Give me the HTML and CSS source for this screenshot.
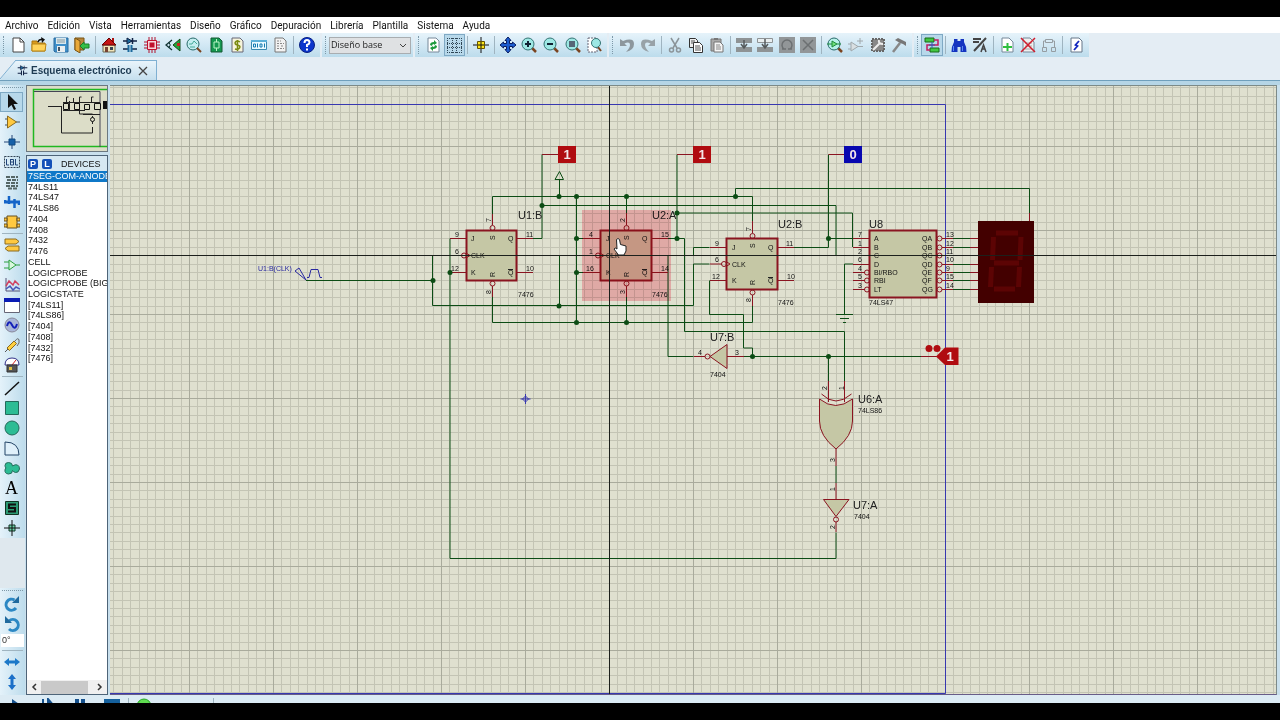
FILE: index.html
```html
<!DOCTYPE html>
<html lang="es">
<head>
<meta charset="utf-8">
<title>Esquema electrónico</title>
<link rel="stylesheet" href="styles.css">
</head>
<body>
<div class="letterbox"></div>
<nav class="menu" aria-label="Menú principal">
<button>Archivo</button><button>Edición</button><button>Vista</button><button>Herramientas</button><button>Diseño</button><button>Gráfico</button><button>Depuración</button><button>Librería</button><button>Plantilla</button><button>Sistema</button><button>Ayuda</button>
</nav>

<header class="bars">
<div class="bar" role="toolbar" aria-label="Proyecto">
<div class="group n4">
<button aria-label="Nuevo"><svg class="ic" viewBox="0 0 16 16"><path d="M3 1h7l4 4v10H3z" fill="#fff" stroke="#444"/><path d="M10 1v4h4" fill="none" stroke="#444"/></svg></button>
<button aria-label="Abrir"><svg class="ic" viewBox="0 0 16 16"><path d="M1 4h5l1 2h7v8H1z" fill="#d99a1c" stroke="#a87410"/><path d="M1 14V7h14l-1 7z" fill="#ffd35a" stroke="#b88618"/><path d="M7 5q1-3 4-2.500" fill="none" stroke="#111" stroke-width="1.500"/><path d="M10 0l4 2.500L11 6z" fill="#111"/></svg></button>
<button aria-label="Guardar"><svg class="ic" viewBox="0 0 16 16"><path d="M1 1h14v14H2l-1-1z" fill="#3f8fc9" stroke="#2a6a9e"/><path d="M3 1h10v6H3z" fill="#d8e8ee"/><path d="M4 3h8M4 5h8" stroke="#8a9aa0"/><path d="M4 9h8v6H4z" fill="#e9eef0"/><path d="M5 10h2v4H5z" fill="#456"/></svg></button>
<button aria-label="Cerrar proyecto"><svg class="ic" viewBox="0 0 16 16"><path d="M1 1h9v12H1z" fill="#b8863a" stroke="#7a5414"/><path d="M1 1l5 3v12l-5-3z" fill="#e8a93a" stroke="#7a5414"/><path d="M6 9l4-4v2h5v4h-5v2z" fill="#34c048" stroke="#18802a"/></svg></button>
</div><i class="sep"></i>
<div class="group n9">
<button aria-label="Inicio"><svg class="ic" viewBox="0 0 16 16"><path d="M11 1h2v4h-2z" fill="#a11"/><path d="M2 8h12v7H2z" fill="#f1e4b8" stroke="#665"/><path d="M1 8l7-7 7 7z" fill="#c61414" stroke="#600"/><path d="M4 10h3v5H4z" fill="#743"/><path d="M9 10h3v3H9z" fill="#345"/></svg></button>
<button aria-label="Esquema"><svg class="ic" viewBox="0 0 16 16"><path d="M1 4h14M1 12h5M9 12h6" stroke="#124" stroke-width="1.500"/><path d="M5 1v6l5-3z" fill="#1c6a9e" stroke="#124"/><path d="M10.500 1v6" stroke="#124" stroke-width="1.500"/><path d="M6.500 8v7M9.500 8v7" stroke="#1c6a9e" stroke-width="2"/></svg></button>
<button aria-label="PCB"><svg class="ic" viewBox="0 0 16 16"><path d="M5 0v16M8 0v16M11 0v16M0 5h16M0 8h16M0 11h16" stroke="#b0102c"/><path d="M3.500 3.500h9v9h-9z" fill="#f6d5da" stroke="#c0102c"/><path d="M5.500 5.500h5v5h-5z" fill="#c0102c"/></svg></button>
<button aria-label="Visor 3D"><svg class="ic" viewBox="0 0 16 16"><path d="M7 3L1 8l6 5" fill="none" stroke="#133" stroke-width="1.300"/><path d="M4 5.500q2.500 2.500 0 5" fill="none" stroke="#133"/><path d="M15 2v12L8 8z" fill="#24a43a" stroke="#154a1c"/><path d="M12 6h3v3h-3z" fill="#c22"/></svg></button>
<button aria-label="Visor Gerber"><svg class="ic" viewBox="0 0 16 16"><circle cx="7" cy="7" r="6" fill="#c4eef0" stroke="#286a6a"/><path d="M3 7h3l2-3 3 3M4 10h5" fill="none" stroke="#4a9"/><path d="M11 11l4 4" stroke="#7a4420" stroke-width="2"/></svg></button>
<button aria-label="Explorador"><svg class="ic" viewBox="0 0 16 16"><path d="M3 1h8l3 3v11H3z" fill="#149850" stroke="#145a34"/><path d="M6 5h5v6H6zM8.500 2v3M8.500 11v3" fill="none" stroke="#b9f4c5"/></svg></button>
<button aria-label="Materiales"><svg class="ic" viewBox="0 0 16 16"><path d="M3 1h8l3 3v11H3z" fill="#f6f4dc" stroke="#667"/><path d="M11 5Q8 3 6.500 5t2 3 2 3-4.500 1M8.500 3v11" fill="none" stroke="#7a8a10" stroke-width="1.500"/></svg></button>
<button aria-label="Código"><svg class="ic" viewBox="0 0 16 16"><path d="M.500 3.500h15v9H.500z" fill="#eafaff" stroke="#3c8ab0"/><path d="M0 3h16v2H0z" fill="#5cb0d8"/><path d="M2.500 7h2v3h-2zM6.500 6.500v4M9 7h2v3H9zM13.500 6.500v4" fill="none" stroke="#147ab0"/></svg></button>
<button aria-label="Notas"><svg class="ic" viewBox="0 0 16 16"><path d="M3 1h8l3 3v11H3z" fill="#f2f2f2" stroke="#777"/><path d="M5 4h4M5 6.500h7M5 9h3M9 9h3M5 11.500h7" stroke="#888" stroke-dasharray="2 1"/></svg></button>
</div><i class="sep"></i>
<div class="group n1"><button aria-label="Ayuda general"><svg class="ic" viewBox="0 0 16 16"><circle cx="8" cy="8" r="7.500" fill="#0b35cc" stroke="#082080"/><path d="M5.500 6q0-3 2.500-3t2.500 2.500Q10.500 7 8 8v2M8 11.500v2" fill="none" stroke="#fff" stroke-width="2"/></svg></button></div>
</div>
<div class="bar" role="toolbar" aria-label="Variante">
<select class="variant" aria-label="Variante de diseño"><option>Diseño base</option></select>
<svg class="chev" viewBox="0 0 8 5"><path d="M1 1l3 3 3-3" fill="none" stroke="#444"/></svg>
</div>
<div class="bar" role="toolbar" aria-label="Ver">
<div class="group n2">
<button aria-label="Redibujar"><svg class="ic" viewBox="0 0 16 16"><path d="M3 1h8l3 3v11H3z" fill="#fff" stroke="#789"/><path d="M5 8q0-3 4-3V3l3 3-3 2V7q-2 0-2 2zM12 9q0 3-4 3v2l-3-3 3-2v1q2 0 2-2z" fill="#1c9a3c"/></svg></button>
<button class="on" aria-label="Rejilla"><svg class="ic" viewBox="0 0 16 16"><path d="M1 1.500h15M1 6.500h15M1 10.500h15M1 15.500h15M1.500 1v15M6.500 1v15M10.500 1v15M15.500 1v15" stroke="#2f4656" stroke-dasharray="1 1"/></svg></button>
</div><i class="sep"></i>
<div class="group n1"><button aria-label="Origen"><svg class="ic" viewBox="0 0 16 16"><path d="M0 8h16M8 0v16" stroke="#111"/><path d="M4.500 4.500h7v7h-7z" fill="#ffe619" stroke="#665500"/><path d="M5 8h6M8 5v6" stroke="#111"/></svg></button></div><i class="sep"></i>
<div class="group n5">
<button aria-label="Centrar"><svg class="ic" viewBox="0 0 16 16"><path d="M8 0l3 3.500H9.500v3h3V5L16 8l-3.500 3V9.500h-3v3H11L8 16l-3-3.500h1.500v-3h-3V11L0 8l3.500-3v1.500h3v-3H5z" fill="#1c5cd0" stroke="#0a1c60"/></svg></button>
<button aria-label="Acercar"><svg class="ic" viewBox="0 0 16 16"><path d="M11 11l4 4" stroke="#7a4420" stroke-width="2.500"/><circle cx="7" cy="7" r="6" fill="#9de8e4" stroke="#357474"/><path d="M4 7h6M7 4v6" stroke="#123" stroke-width="2"/></svg></button>
<button aria-label="Alejar"><svg class="ic" viewBox="0 0 16 16"><path d="M11 11l4 4" stroke="#7a4420" stroke-width="2.500"/><circle cx="7" cy="7" r="6" fill="#9de8e4" stroke="#357474"/><path d="M4 7h6" stroke="#123" stroke-width="2"/></svg></button>
<button aria-label="Ver todo"><svg class="ic" viewBox="0 0 16 16"><path d="M11 11l4 4" stroke="#7a4420" stroke-width="2.500"/><circle cx="7" cy="7" r="6" fill="#9de8e4" stroke="#357474"/><path d="M4 4h6v6H4z" fill="#567"/></svg></button>
<button aria-label="Ver área"><svg class="ic" viewBox="0 0 16 16"><path d="M2 1h9v14H2z" fill="#fff" stroke="#667" stroke-dasharray="2 1"/><path d="M12 10l3 4" stroke="#7a4420" stroke-width="2"/><circle cx="10" cy="6" r="4.500" fill="#9de8e4" stroke="#357474"/></svg></button>
</div>
</div>
<div class="bar" role="toolbar" aria-label="Editar">
<div class="group n2">
<button aria-label="Deshacer"><svg class="ic" viewBox="0 0 16 16"><path d="M1 2v7h7L5.500 6.500Q11 4 11 8q0 3-4 7 8-2 8-8 0-7-11-3z" fill="#8d979d"/></svg></button>
<button aria-label="Rehacer"><svg class="ic" viewBox="0 0 16 16"><path d="M15 2v7H8l2.500-2.500Q5 4 5 8q0 3 4 7-8-2-8-8 0-7 11-3z" fill="#98a2a8"/></svg></button>
</div><i class="sep"></i>
<div class="group n3">
<button aria-label="Cortar"><svg class="ic" viewBox="0 0 16 16"><path d="M4 1l6 10M12 1L6 11" stroke="#8b9499" stroke-width="1.500"/><circle cx="4.500" cy="13" r="2" fill="none" stroke="#8b9499" stroke-width="1.500"/><circle cx="11.500" cy="13" r="2" fill="none" stroke="#8b9499" stroke-width="1.500"/></svg></button>
<button aria-label="Copiar"><svg class="ic" viewBox="0 0 16 16"><path d="M1.500 1.500h6l2 2v7h-8z" fill="#eee" stroke="#333"/><path d="M5.500 5.500h6l3 3v7h-9z" fill="#fff" stroke="#333"/><path d="M3 4h4M3 6h3M7 9h5M7 11h6M7 13h6" stroke="#555"/></svg></button>
<button aria-label="Pegar"><svg class="ic" viewBox="0 0 16 16"><path d="M2 2h10v12H2z" fill="#aaa" stroke="#777"/><path d="M5 1h4v2H5z" fill="#777"/><path d="M5 5h6l3 3v7H5z" fill="#f4f4f4" stroke="#777"/><path d="M7 8h4M7 10h5M7 12h5" stroke="#888"/></svg></button>
</div><i class="sep"></i>
<div class="group n4">
<button aria-label="Copiar bloque"><svg class="ic" viewBox="0 0 16 16"><path d="M0 1h16v5H0zM0 10h16v5H0z" fill="#8e9395"/><path d="M8 3v7M5 7l3 4 3-4" stroke="#555a5c" stroke-width="1.500" fill="none"/></svg></button>
<button aria-label="Mover bloque"><svg class="ic" viewBox="0 0 16 16"><path d="M.500 1.500h15v4H.500z" fill="#e8eef0" stroke="#8e9395"/><path d="M0 10h16v5H0z" fill="#8e9395"/><path d="M8 2v8M5 7l3 4 3-4" stroke="#555a5c" stroke-width="1.500" fill="none"/></svg></button>
<button aria-label="Rotar bloque"><svg class="ic" viewBox="0 0 16 16"><path d="M0 0h16v16H0z" fill="#929698"/><path d="M5 12a5 5 0 1 1 6 0M3 12h4M9 12h4" stroke="#6c7072" stroke-width="1.500" fill="none"/></svg></button>
<button aria-label="Borrar bloque"><svg class="ic" viewBox="0 0 16 16"><path d="M0 0h16v16H0z" fill="#929698"/><path d="M3 3l10 10M13 3L3 13" stroke="#6c7072" stroke-width="1.500"/></svg></button>
</div><i class="sep"></i>
<div class="group n4">
<button aria-label="Elegir dispositivo"><svg class="ic" viewBox="0 0 16 16"><path d="M11 11l4 4" stroke="#7a4420" stroke-width="2.500"/><circle cx="7" cy="7" r="6" fill="#b7f1e8" stroke="#286a6a"/><path d="M5 4v6l5-3zM0 7h5M10 7h4" fill="#6fe07a" stroke="#1c8a3c"/></svg></button>
<button aria-label="Crear dispositivo"><svg class="ic" viewBox="0 0 16 16"><path d="M3 5v9l7-4.500zM0 7h3M0 12h3M10 9.500h5M12 1v6M9 4h6" fill="#d9dfe2" stroke="#a0a8ac"/></svg></button>
<button aria-label="Encapsulado"><svg class="ic" viewBox="0 0 16 16"><path d="M2 2h12v12H2z" fill="#888" stroke="#666" stroke-width="2" stroke-dasharray="2 1"/><path d="M3 13l7-7M9 3q-1 4 4 4" stroke="#eee" stroke-width="2" fill="none"/></svg></button>
<button aria-label="Descomponer"><svg class="ic" viewBox="0 0 16 16"><path d="M2 15l7-9" stroke="#888" stroke-width="2.500"/><path d="M4 3l3-2 8 4v4l-3-2-3-1z" fill="#777"/></svg></button>
</div>
</div>
<div class="bar" role="toolbar" aria-label="Diseño">
<div class="group n1"><button class="on" aria-label="Autorutado"><svg class="ic" viewBox="0 0 16 16"><path d="M1 1h9v4H1zM6 11h9v4H6z" fill="#42c842" stroke="#186a18"/><path d="M10 3h4v5H3v5h3" fill="none" stroke="#c21c60" stroke-width="1.500"/><path d="M8 5v6M5 8h6" stroke="#2860b8"/></svg></button></div><i class="sep"></i>
<div class="group n2">
<button aria-label="Buscar"><svg class="ic" viewBox="0 0 16 16"><path d="M3 2h3.500v2h3V2H13v3q2.500 4 2.500 10H9.500v-5h-3v5h-6Q.500 9 3 5z" fill="#1434c0"/><path d="M2.500 9v5M11.500 9v5" stroke="#5a8cf0"/></svg></button>
<button aria-label="Propiedades"><svg class="ic" viewBox="0 0 16 16"><path d="M1 2h8M1 5h6M14 1L2 14" stroke="#444" stroke-width="2"/><path d="M9 15l2.500-7L14 15M10 12h3" stroke="#444" stroke-width="1.500" fill="none"/></svg></button>
</div><i class="sep"></i>
<div class="group n3">
<button aria-label="Nueva hoja"><svg class="ic" viewBox="0 0 16 16"><path d="M3 1h7l4 4v10H3z" fill="#fff" stroke="#789"/><path d="M4 10h9M8.500 6v8" stroke="#30c040" stroke-width="2"/></svg></button>
<button aria-label="Quitar hoja"><svg class="ic" viewBox="0 0 16 16"><path d="M3 1h7l4 4v10H3z" fill="#eee" stroke="#789"/><path d="M5 6h7M5 9h7M5 12h7" stroke="#aaa"/><path d="M1 1l14 14M15 1L1 15" stroke="#d01c2c" stroke-width="1.500"/></svg></button>
<button aria-label="Jerarquía"><svg class="ic" viewBox="0 0 16 16"><path d="M4.500 2.500h7v3h-7zM1.500 10.500h4v4h-4zM10.500 10.500h4v4h-4zM4 4H2.500v6M12 4h1.500v6" fill="none" stroke="#959da2"/></svg></button>
</div><i class="sep"></i>
<div class="group n1"><button aria-label="Reglas eléctricas"><svg class="ic" viewBox="0 0 16 16"><path d="M3 1h8l3 3v11H3z" fill="#fff" stroke="#678"/><path d="M11 4L7.500 8l2 1L6 13" fill="none" stroke="#1428c0" stroke-width="1.800"/></svg></button></div>
</div>
</header>

<div class="tabs" role="tablist">
<div class="tab" role="tab" aria-selected="true">
<svg class="ic tabicon" viewBox="0 0 16 16"><path d="M1 4h14M1 12h5M9 12h6" stroke="#124" stroke-width="1.500"/><path d="M5 1v6l5-3z" fill="#1c6a9e" stroke="#124"/><path d="M10.500 1v6" stroke="#124"/><path d="M6.500 8v7M9.500 8v7" stroke="#124" stroke-width="1.500"/></svg>
<span>Esquema electrónico</span>
<button class="close" aria-label="Cerrar pestaña"><svg viewBox="0 0 10 10"><path d="M1 1l8 8M9 1L1 9" stroke="#444" stroke-width="1.300"/></svg></button>
</div>
<svg class="slope" viewBox="0 0 16 20" preserveAspectRatio="none"><path d="M0 0h16L0 20z" fill="#e4edf4"/><path d="M16 0L0 19" stroke="#7fb0d2" fill="none"/></svg>
</div>
<div class="strip"></div>

<main class="work">
<aside class="modes">
<div class="vbar top" role="toolbar" aria-label="Modos">
<div class="vgroup">
<button class="on" aria-label="Selección"><svg class="ic" viewBox="0 0 16 16"><path d="M4 0v14l3.500-3 2.500 5 2-1-2.500-5H14z" fill="#111"/></svg></button>
<button aria-label="Componente"><svg class="ic" viewBox="0 0 16 16"><path d="M1 5h3M1 11h3M12 8h4" stroke="#456"/><path d="M3.500 2v12l9-6z" fill="#ffc940" stroke="#8a6a20"/></svg></button>
<button aria-label="Unión"><svg class="ic" viewBox="0 0 16 16"><path d="M0 8h16M8 1v14" stroke="#247"/><path d="M5 5h6v6H5z" fill="#1660a8" stroke="#124a80"/></svg></button>
<button aria-label="Etiqueta"><svg class="ic" viewBox="0 0 16 16"><path d="M.500 2.500h15v11H.500z" fill="none" stroke="#345" stroke-dasharray="2 1"/><path d="M2.500 5v6h2.500M6.500 5v6h3V8h-3M6.500 5.500h3V8M11.500 5v6h2.500" fill="none" stroke="#247"/></svg></button>
<button aria-label="Texto"><svg class="ic" viewBox="0 0 16 16"><path d="M2 3h12M3 6h11M2 9h12M2 12h12M4 14.500h10" stroke="#566" stroke-width="1.800" stroke-dasharray="4 1"/></svg></button>
<button aria-label="Bus"><svg class="ic" viewBox="0 0 16 16"><path d="M0 8h16" stroke="#1464c8" stroke-width="3"/><path d="M1 6v3M5 2v8M10.500 5v9M15 7v4" stroke="#1464c8" stroke-width="2.500"/></svg></button>
<button aria-label="Subcircuito"><svg class="ic" viewBox="0 0 16 16"><path d="M3 2h10v12H3z" fill="#ffc940" stroke="#665020"/><path d="M0 4h3v3H0zM13 4h3v3h-3zM0 10h3v3H0zM13 10h3v3h-3z" fill="#ffc940" stroke="#665020"/></svg></button>
</div><i class="hsep"></i>
<div class="vgroup">
<button aria-label="Terminal"><svg class="ic" viewBox="0 0 16 16"><path d="M1 2h11l3 2.500L12 7H1zM15 9H4l-3 2.500L4 14h11z" fill="#ffc940" stroke="#8a6a20"/></svg></button>
<button aria-label="Patilla"><svg class="ic" viewBox="0 0 16 16"><path d="M5 3v10l7-5zM0 5h5M0 11h5M12 8h4" fill="#d8f8dc" stroke="#2ca040"/></svg></button>
<button aria-label="Gráfica"><svg class="ic" viewBox="0 0 16 16"><path d="M2 1v13h14" fill="none" stroke="#557"/><path d="M2 9l3-5 4 4 2-4 4 4" fill="none" stroke="#d04060" stroke-width="1.500"/><path d="M2 12l4-3 3 4 3-3 4 2" fill="none" stroke="#4858b8" stroke-width="1.500"/></svg></button>
<button aria-label="Ventana"><svg class="ic" viewBox="0 0 16 16"><path d="M.500 1.500h15v14H.500z" fill="#fff" stroke="#667"/><path d="M0 1h16v4H0z" fill="#0a1cb4"/></svg></button>
<button aria-label="Generador"><svg class="ic" viewBox="0 0 16 16"><circle cx="8" cy="8" r="7" fill="#a9b6d8" stroke="#889"/><path d="M3 9q2-7 5-1t5-1" fill="none" stroke="#1420b8" stroke-width="2"/></svg></button>
<button aria-label="Sonda"><svg class="ic" viewBox="0 0 16 16"><path d="M1 15l3-3" stroke="#555"/><path d="M3 11l7-7 2.500 2.500-7 7z" fill="#ffd040" stroke="#8a6a20"/><path d="M11 4q3-4 4-1t-2 6" fill="none" stroke="#666"/></svg></button>
<button aria-label="Instrumentos"><svg class="ic" viewBox="0 0 16 16"><path d="M1 8Q1 1 8 1t7 7z" fill="#fff" stroke="#338"/><path d="M8 8l4-5" stroke="#c22"/><path d="M3 8h10v7H3z" fill="#555" stroke="#333"/><path d="M5 10h3v3H5z" fill="#e0c040"/></svg></button>
</div><i class="hsep"></i>
<div class="vgroup">
<button aria-label="Línea"><svg class="ic" viewBox="0 0 16 16"><path d="M1 15L15 2" stroke="#111" stroke-width="1.500"/></svg></button>
<button aria-label="Rectángulo"><svg class="ic" viewBox="0 0 16 16"><path d="M1.500 1.500h13v13h-13z" fill="#2cbc94" stroke="#246a5a"/></svg></button>
<button aria-label="Círculo"><svg class="ic" viewBox="0 0 16 16"><circle cx="8" cy="8" r="7" fill="#2cbc94" stroke="#246a5a"/></svg></button>
<button aria-label="Arco"><svg class="ic" viewBox="0 0 16 16"><path d="M1 2v13h14Q15 2 1 2z" fill="#dff0fa" stroke="#246"/></svg></button>
<button aria-label="Trayectoria"><svg class="ic" viewBox="0 0 16 16"><path d="M4.500 2.500q4 0 4 3.500 3-2 5-1 2 1 2 4-1 4-4 3.500-2-.500-3-2 0 3.500-4 3.500-4-.500-3.500-4 0-1 1-2-1-1-1-2.500 0-3 3.500-3z" fill="#2cbc94" stroke="#246a5a"/></svg></button>
<button class="letter" aria-label="Texto gráfico">A</button>
<button aria-label="Símbolo"><svg class="ic" viewBox="0 0 16 16"><path d="M1.500 1.500h13v13h-13z" fill="#2c9a74" stroke="#132"/><path d="M12 4.500H5V8h6v3.500H4" fill="none" stroke="#111" stroke-width="2"/></svg></button>
<button aria-label="Marcador"><svg class="ic" viewBox="0 0 16 16"><path d="M5 5h6v6H5z" fill="#6ad0a8" stroke="#132"/><path d="M0 8h16M8 0v16" stroke="#111"/></svg></button>
</div>
</div>
<div class="vbar bottom" role="toolbar" aria-label="Orientación">
<div class="vgroup">
<button aria-label="Girar a la derecha"><svg class="ic" viewBox="0 0 16 16"><path d="M12 12A5.500 5.500 0 1 1 10.500 4" fill="none" stroke="#2c88c4" stroke-width="3"/><path d="M8 7h7V0z" fill="#206a9e"/></svg></button>
<button aria-label="Girar a la izquierda"><svg class="ic" viewBox="0 0 16 16"><path d="M5 13A5.500 5.500 0 1 0 5 5" fill="none" stroke="#2c88c4" stroke-width="3"/><path d="M8 7H1V0z" fill="#206a9e"/></svg></button>
</div>
<input class="angle" aria-label="Ángulo" value="0°">
<i class="hsep"></i>
<div class="vgroup">
<button aria-label="Reflejo horizontal"><svg class="ic" viewBox="0 0 16 16"><path d="M0 8l5-4v2.500h6V4l5 4-5 4V9.500H5V12z" fill="#1c78c8"/></svg></button>
<button aria-label="Reflejo vertical"><svg class="ic" viewBox="0 0 16 16"><path d="M8 0l4 5H9.500v6H12l-4 5-4-5h2.500V5H4z" fill="#1c70c8"/></svg></button>
</div>
</div>
</aside>

<section class="panel">
<div class="preview">
<svg viewBox="0 0 80 66"><path d="M80 3.500H6.500v57H80" fill="none" stroke="#20b820" stroke-width="1.500"/><path d="M7 5.500h66V61" fill="none" stroke="#445"/><path d="M21 20.500h13M34.500 20v27h31v-6M65.500 38v-8M36 16.500h37M39.500 16v-5h2M52.500 16v-5h2M64.500 16v-5h2M42.500 15v10M44 24.500h14M52.500 16v12h13M56 28.500h17M36 24.500h8M46.500 12v4" fill="none" stroke="#222"/><path d="M36.500 17.500h5v6h-5zM47.500 17.500h5v6h-5zM57.500 18.500h5v5h-5zM67.500 17.500h6v6h-6z" fill="#dcddc8" stroke="#111"/><path d="M76 15h4v8h-4z" fill="#111"/><circle cx="65.500" cy="33.500" r="2" fill="#dcddc8" stroke="#111"/></svg>
</div>
<div class="devices">
<div class="dhead"><button>P</button><button>L</button><span>DEVICES</span></div>
<ul role="listbox" aria-label="DEVICES">
<li class="sel" role="option" aria-selected="true">7SEG-COM-ANODE</li><li role="option">74LS11</li><li role="option">74LS47</li><li role="option">74LS86</li><li role="option">7404</li><li role="option">7408</li><li role="option">7432</li><li role="option">7476</li><li role="option">CELL</li><li role="option">LOGICPROBE</li><li role="option">LOGICPROBE (BIG)</li><li role="option">LOGICSTATE</li><li role="option">[74LS11]</li><li role="option">[74LS86]</li><li role="option">[7404]</li><li role="option">[7408]</li><li role="option">[7432]</li><li role="option">[7476]</li>
</ul>
<div class="hscroll"><button aria-label="Izquierda"><svg viewBox="0 0 6 8"><path d="M5 1L2 4l3 3" fill="none" stroke="#333" stroke-width="1.500"/></svg></button><i></i><button aria-label="Derecha"><svg viewBox="0 0 6 8"><path d="M1 1l3 3-3 3" fill="none" stroke="#333" stroke-width="1.500"/></svg></button></div>
</div>
</section>

<section class="canvas">
<svg class="sheet" role="img" aria-label="Esquema">
<defs>
<pattern id="grid" x="21" y="62" width="84" height="84" patternUnits="userSpaceOnUse">
<path class="minor" d="M8.500 0v84M17.500 0v84M25.500 0v84M34.500 0v84M42.500 0v84M50.500 0v84M59.500 0v84M67.500 0v84M76.500 0v84M0 8.500h84M0 17.500h84M0 25.500h84M0 34.500h84M0 42.500h84M0 50.500h84M0 59.500h84M0 67.500h84M0 76.500h84"/>
<path class="major" d="M.500 0v84M0 .500h84"/>
</pattern>
</defs>
<g transform="translate(-110 -86)">
<rect x="110" y="86" width="4000" height="3000" fill="url(#grid)"/>
<path class="border" d="M110 104.500h835.500v589H110"/>
<g class="body">
<rect x="466.500" y="230.500" width="50" height="50"/>
<rect x="600.500" y="230.500" width="51" height="50"/>
<rect x="726.500" y="238.500" width="51" height="51"/>
<rect x="869.500" y="230.500" width="67" height="67"/>
<path d="M727 344.500v24l-17-12z"/>
<path d="M823.500 499.500h25.500l-13 17z"/>
<path d="M819.500 399q16 13 33 0v22q0 15-16.500 28q-16.500-13-16.500-28z"/>
<path class="open" d="M821.500 394q14 14 30 0"/>
</g>
<g class="wire">
<path d="M306 280.500h126.500M449.500 255.500h-17v50h261v-41.500h16"/>
<path d="M450 238.500v320h386v-26"/>
<path d="M492.500 214v-17.500h260v25M492.500 297v25.500h260V306"/>
<path d="M533 238.500h9v-84M542 205.500h294v50h17"/>
<path d="M559.500 196v-17M576.500 196v126M576.500 238.500h7M576.500 272.500h7M559.500 305.500v-50h24M626.500 196v17M626.500 297v25"/>
<path d="M555 179.500h8.500l-4-8z"/>
<path d="M668 238.500h16.500v93h160v50M677 238.500v-84M677 213h175.500v34"/>
<path d="M693.500 356.500h-25.500v-101h25.500v-8h16"/>
<path d="M735.500 196v-7.500h294v25"/>
<path d="M709.500 280.500v34h34v33.500h9v8.500M744 356.500h177M828.500 356.500v25"/>
<path d="M794 247.500h34.500v-93M828.500 238.500h24.500M853 264h-8.500v50M836 314.500h17M840 318.500h9M843 322.500h3M836 466v17"/>
<path d="M953 238.500h17M953 247.500h17M953 255.500h17M953 264.500h17M953 272.500h17M953 280.500h17M953 289.500h17"/>
</g>
<g class="pin">
<path d="M450 238.500h16M450 255.500h11M450 272.500h16M517 238.500h16M517 272.500h16M492.500 214v11M492.500 286v11"/>
<path d="M583 238.500h17M583 255.500h13M583 272.500h17M652 238.500h16M652 272.500h16M626.500 213v12M626.500 286v11"/>
<path d="M710 247.500h16M710 264h12M710 280.500h16M778 247.500h16M778 280.500h16M752.500 221v12M752.500 295v11"/>
<path d="M542 154.500h16M677 154.500h16M828.500 154.500h16M1029.500 213v9"/>
<path d="M853 238.500h17M853 247.500h17M853 255.500h17M853 264.500h17M853 272.500h12M853 280.500h12M853 289.500h12"/>
<path d="M942 238.500h11M942 247.500h11M942 255.500h11M942 264.500h11M942 272.500h11M942 280.500h11M942 289.500h11M970 238.500h8M970 247.500h8M970 255.500h8M970 264.500h8M970 272.500h8M970 280.500h8M970 289.500h8"/>
<path d="M694 356.500h11M727 356.500h17M828.500 381v21M844.500 381v21M836 449v17M836 483v16M836 522v10M921 356.500h16"/>
<circle cx="492.500" cy="228" r="2.500"/><circle cx="492.500" cy="283.500" r="2.500"/><circle cx="464" cy="255.500" r="2.500"/>
<circle cx="626.500" cy="228" r="2.500"/><circle cx="626.500" cy="283.500" r="2.500"/><circle cx="598" cy="255.500" r="2.500"/>
<circle cx="752.500" cy="236" r="2.500"/><circle cx="752.500" cy="292.500" r="2.500"/><circle cx="724" cy="264" r="2.500"/>
<path d="M466 253l4 2.500-4 2.500M600 253l4 2.500-4 2.500M726 261.500l4 2.500-4 2.500"/>
<circle cx="867" cy="272.500" r="2.500"/><circle cx="867" cy="280.500" r="2.500"/><circle cx="867" cy="289.500" r="2.500"/>
<circle cx="939.500" cy="238.500" r="2.500"/><circle cx="939.500" cy="247.500" r="2.500"/><circle cx="939.500" cy="255.500" r="2.500"/><circle cx="939.500" cy="264.500" r="2.500"/><circle cx="939.500" cy="272.500" r="2.500"/><circle cx="939.500" cy="280.500" r="2.500"/><circle cx="939.500" cy="289.500" r="2.500"/>
<circle cx="707.500" cy="356.500" r="2.500"/><circle cx="836" cy="519.500" r="2.500"/>
</g>
<rect x="978" y="221" width="56" height="82" fill="#430000"/>
<path d="M996 233h22M993.500 237l-1 23M1021 237l-1 23M994 263h25M991.500 267l-1 20M1019.500 267l-1 20M994 289h21" stroke="#5c0404" stroke-width="5" fill="none"/>
<g class="t7">
<text x="471" y="241">J</text><text x="471" y="258">CLK</text><text x="471" y="275">K</text><text x="508" y="241">Q</text><text x="508" y="275">Q</text>
<text x="455" y="237">9</text><text x="455" y="254">6</text><text x="451" y="271">12</text><text x="526" y="237">11</text><text x="526" y="271">10</text><text x="518" y="297">7476</text>
<text x="606" y="241">J</text><text x="606" y="258">CLK</text><text x="606" y="275">K</text><text x="642" y="241">Q</text><text x="642" y="275">Q</text>
<text x="589" y="237">4</text><text x="589" y="254">1</text><text x="586" y="271">16</text><text x="661" y="237">15</text><text x="661" y="271">14</text><text x="652" y="297">7476</text>
<text x="732" y="250">J</text><text x="732" y="267">CLK</text><text x="732" y="283">K</text><text x="768" y="250">Q</text><text x="768" y="283">Q</text>
<text x="715" y="246">9</text><text x="715" y="262">6</text><text x="712" y="279">12</text><text x="786" y="246">11</text><text x="787" y="279">10</text><text x="778" y="305">7476</text>
<text x="874" y="241">A</text><text x="874" y="250">B</text><text x="874" y="258">C</text><text x="874" y="267">D</text><text x="874" y="275">BI/RBO</text><text x="874" y="283">RBI</text><text x="874" y="292">LT</text>
<text x="922" y="241">QA</text><text x="922" y="250">QB</text><text x="922" y="258">QC</text><text x="922" y="267">QD</text><text x="922" y="275">QE</text><text x="922" y="283">QF</text><text x="922" y="292">QG</text>
<text x="858" y="237">7</text><text x="858" y="246">1</text><text x="858" y="254">2</text><text x="858" y="262">6</text><text x="858" y="271">4</text><text x="858" y="279">5</text><text x="858" y="288">3</text>
<text x="946" y="237">13</text><text x="946" y="246">12</text><text x="946" y="254">11</text><text x="946" y="262">10</text><text x="946" y="271">9</text><text x="946" y="279">15</text><text x="946" y="288">14</text>
<text x="869" y="305">74LS47</text><text x="858" y="413">74LS86</text><text x="854" y="519">7404</text><text x="710" y="377">7404</text>
<text x="698" y="355">4</text><text x="735" y="355">3</text>
<text transform="translate(491 222) rotate(-90)">7</text><text transform="translate(495 240) rotate(-90)">S</text><text transform="translate(495 277) rotate(-90)">R</text><text transform="translate(491 294) rotate(-90)">8</text>
<text transform="translate(625 222) rotate(-90)">2</text><text transform="translate(629 240) rotate(-90)">S</text><text transform="translate(629 277) rotate(-90)">R</text><text transform="translate(625 294) rotate(-90)">3</text>
<text transform="translate(751 231) rotate(-90)">7</text><text transform="translate(755 248) rotate(-90)">S</text><text transform="translate(755 285) rotate(-90)">R</text><text transform="translate(751 302) rotate(-90)">8</text>
<text transform="translate(827 390) rotate(-90)">2</text><text transform="translate(844 390) rotate(-90)">1</text><text transform="translate(835 462) rotate(-90)">3</text><text transform="translate(835 491) rotate(-90)">1</text><text transform="translate(835 529) rotate(-90)">2</text>
</g>
<path d="M508 269.500h5M642 269.500h5M768 277.500h5" stroke="#222"/>
<g class="t11"><text x="518" y="219">U1:B</text><text x="652" y="219">U2:A</text><text x="778" y="228">U2:B</text><text x="869" y="228">U8</text><text x="710" y="341">U7:B</text><text x="858" y="403">U6:A</text><text x="853" y="509">U7:A</text></g>
<g class="clk"><text x="258" y="271">U1:B(CLK)</text><path d="M295 271l4-3 7 12zM307 277.500h2l2-8h7l2 8h2"/></g>
<rect class="pick" x="582" y="210" width="89" height="91"/>
<g class="dot">
<circle cx="433" cy="280.500" r="2.500"/><circle cx="450" cy="272.500" r="2.500"/><circle cx="542" cy="205.500" r="2.500"/><circle cx="559" cy="196.500" r="2.500"/><circle cx="576.500" cy="196.500" r="2.500"/><circle cx="626.500" cy="196.500" r="2.500"/><circle cx="576.500" cy="238.500" r="2.500"/><circle cx="576.500" cy="272.500" r="2.500"/><circle cx="576.500" cy="322.500" r="2.500"/><circle cx="626.500" cy="322.500" r="2.500"/><circle cx="559" cy="306" r="2.500"/><circle cx="677" cy="213" r="2.500"/><circle cx="677" cy="238.500" r="2.500"/><circle cx="735.500" cy="196.500" r="2.500"/><circle cx="828.500" cy="238.500" r="2.500"/><circle cx="752.500" cy="356.500" r="2.500"/><circle cx="828.500" cy="356.500" r="2.500"/>
</g>
<g class="probe"><rect x="558" y="146" width="18" height="17"/><rect x="693" y="146" width="18" height="17"/><rect class="low" x="844" y="146" width="18" height="17"/><path d="M936 356.500l9-9h13.500v17.500H945z"/><circle cx="929" cy="348.500" r="3.500"/><circle cx="937" cy="348.500" r="3.500"/>
<text x="567" y="159">1</text><text x="702" y="159">1</text><text x="853" y="159">0</text><text x="950" y="361">1</text></g>
<path class="border" d="M525.500 394v10M520.500 399h10M525.500 396l3 3-3 3-3-3z"/>
<path class="cross" d="M110 255.500h4000M609.500 86v3000"/>
<path d="M616.500 239.500q1.500-2 3 0l1 5 5.500 1.500v5l-2 4h-5.500l-4.500-6q1-2 3 0z" fill="#fff" stroke="#222"/>
</g>
</svg>
</section>
</main>

<footer class="sim" role="toolbar" aria-label="Simulación">
<button aria-label="Ejecutar"><svg class="ic" viewBox="0 0 16 16"><path d="M4 1v14l10-7z" fill="#15508c"/></svg></button>
<button aria-label="Paso"><svg class="ic" viewBox="0 0 16 16"><path d="M3 1v14M8 1v14l6-7z" fill="#15508c" stroke="#15508c" stroke-width="2"/></svg></button>
<button aria-label="Pausa"><svg class="ic" viewBox="0 0 16 16"><path d="M3 1h4v14H3zM9 1h4v14H9z" fill="#15508c"/></svg></button>
<button aria-label="Parar"><svg class="ic" viewBox="0 0 16 16"><path d="M0 1h16v14H0z" fill="#15609c"/></svg></button>
<i class="sep"></i>
<button aria-label="Mensajes"><svg class="ic" viewBox="0 0 16 16"><circle cx="8" cy="8" r="7" fill="#5fdc50" stroke="#2aa82a"/></svg></button>
<span class="msgs"></span>
</footer>
<div class="letterbox"></div>
</body>
</html>
```

FILE: styles.css
```css
* { box-sizing: border-box; }
body {
  margin: 0;
  height: 100vh;
  display: flex;
  flex-direction: column;
  overflow: hidden;
  background: #e4edf4;
  font-family: "Liberation Sans", Arial, sans-serif;
  color: #111;
}
button {
  border: 0;
  padding: 0;
  background: none;
  font: inherit;
  color: inherit;
}
svg { display: block; }
.letterbox { flex: none; height: 17px; background: #000; }
.menu {
  flex: none;
  display: flex;
  gap: 9px;
  height: 16px;
  padding-left: 5px;
  background: #fff;
  font: 10px/17px Roboto, "Noto Sans", sans-serif;
  color: #111;
}
.bars {
  flex: none;
  display: flex;
  gap: 2px;
  height: 24px;
  background: #e4edf4;
}
.bar {
  position: relative;
  display: flex;
  align-items: center;
  padding: 0 2px 0 7px;
  background: linear-gradient(#e6f3fa, #d2e8f4 50%, #bcdcec);
}
.bar::before {
  content: "";
  position: absolute;
  left: 3px;
  top: 3px;
  bottom: 3px;
  border-left: 1px dotted #7d98a8;
}
.group { display: flex; height: 22px; }
.group button { flex: 1; display: grid; place-items: center; }
.n1 { width: 22px; }
.n2 { width: 43px; }
.n3 { width: 64px; }
.n4 { width: 86px; }
.n5 { width: 108px; }
.n9 { width: 193px; }
.ic { width: 16px; height: 16px; }
.on { background: #b7d8ea; box-shadow: inset 0 0 0 1px #7fa9c4; }
.sep {
  width: 1px;
  height: 18px;
  margin: 0 2px;
  background: #9fb4c0;
}
.variant {
  width: 82px;
  height: 17px;
  padding: 0 0 0 1px;
  border: 1px solid #a9adb0;
  border-radius: 0;
  appearance: none;
  background: #dfe1e3;
  color: #222;
  font: 9px/14px "Open Sans", "Noto Sans", sans-serif;
}
.chev { position: absolute; right: 6px; top: 10px; width: 8px; height: 5px; }
.tabs {
  flex: none;
  position: relative;
  display: flex;
  height: 23px;
  padding-top: 3px;
  background: #e4edf4;
}
.tab {
  display: flex;
  align-items: center;
  width: 157px;
  padding-left: 17px;
  border: 1px solid #7fb0d2;
  border-width: 1px 1px 0 0;
  background: linear-gradient(#e9f4fb, #c5dfee);
  font-size: 10px;
  font-weight: bold;
  color: #1d3a52;
}
.tabicon { width: 11px; height: 13px; margin-right: 3px; }
.close { margin-left: 6px; }
.close svg { width: 10px; height: 10px; }
.slope { position: absolute; left: 0; top: 3px; width: 16px; height: 20px; }
.strip {
  flex: none;
  height: 5px;
  border-top: 1px solid #6f9fbc;
  background: #b5d5e6;
}
.work {
  flex: 1;
  min-height: 0;
  display: flex;
  background: #c9e0ed;
}
.modes {
  flex: none;
  width: 25px;
  display: flex;
  flex-direction: column;
  justify-content: space-between;
  background: #dfe8ee;
}
.vbar {
  position: relative;
  padding-top: 7px;
  background: linear-gradient(90deg, #e4f2fa, #bddcec);
}
.vbar::before {
  content: "";
  position: absolute;
  left: 2px;
  right: 2px;
  top: 2px;
  border-top: 1px dotted #7d98a8;
}
.vgroup button {
  display: grid;
  place-items: center;
  width: 23px;
  height: 20px;
}
.vgroup button.letter { font: 18px/20px "Liberation Serif", serif; color: #000; }
.hsep {
  display: block;
  height: 1px;
  margin: 1px 2px;
  background: #9fb4c0;
}
.angle {
  display: block;
  width: 23px;
  height: 13px;
  margin-left: 1px;
  border: 0;
  padding: 0 1px;
  background: #fff;
  color: #333;
  font: 9px/13px "Liberation Sans", Arial, sans-serif;
}
.bottom { padding: 6px 0 3px; }
.bottom .hsep { margin: 3px 2px 1px; }
.panel {
  flex: none;
  width: 82px;
  margin: 0 2px 0 1px;
  display: flex;
  flex-direction: column;
  gap: 3px;
}
.preview {
  flex: none;
  height: 67px;
  border: 1px solid #6b7880;
  background: #dcddc8;
}
.preview svg { width: 80px; height: 66px; }
.devices {
  flex: 1;
  min-height: 0;
  display: flex;
  flex-direction: column;
  border: 1px solid #4e6478;
  background: #fff;
}
.dhead {
  display: flex;
  align-items: center;
  flex: none;
  height: 15px;
  padding-left: 1px;
  gap: 4px;
  background: #d6e8f2;
  font-size: 9px;
}
.dhead button {
  width: 10px;
  height: 10px;
  border-radius: 2px;
  background: #1450b8;
  color: #fff;
  font-size: 9px;
  font-weight: bold;
  line-height: 10px;
}
.dhead span { margin-left: 5px; }
.devices ul {
  flex: none;
  display: grid;
  grid-auto-rows: 1fr;
  height: 193px;
  margin: 0;
  padding: 0;
  overflow: hidden;
  list-style: none;
  font-size: 9px;
  line-height: 11px;
}
.devices li { min-height: 0; padding-left: 1px; white-space: nowrap; overflow: hidden; }
.sel { background: #0f78c8; color: #fff; }
.hscroll {
  display: flex;
  align-items: center;
  height: 14px;
  margin-top: auto;
  background: #f0f0f0;
}
.hscroll button { width: 14px; display: grid; place-items: center; }
.hscroll svg { width: 6px; height: 8px; }
.hscroll i { width: 47px; height: 13px; background: #c9c9c9; }
.hscroll button:last-child { margin-left: auto; }
.canvas {
  flex: 1;
  min-width: 0;
  margin-right: 3px;
  border-top: 1px solid #7c8a88;
  border-right: 1px solid #7c8a88;
  border-bottom: 1px solid #675c88;
  background: #dfe0cf;
}
.sheet {
  width: 100%;
  height: 100%;
  overflow: hidden;
  font-family: "Liberation Sans", Arial, sans-serif;
}
.minor { stroke: #c3c4b4; }
.major { stroke: #a9ab9c; }
.border { fill: none; stroke: #3838b0; }
.body { fill: #c5c7a5; stroke: #8a1420; stroke-width: 2px; }
.body path { stroke-width: 1px; }
.body .open { fill: none; }
.wire { fill: none; stroke: #0c4c14; }
.pin { fill: none; stroke: #8a1420; }
.dot { fill: #0c4c14; }
.t7 { font-size: 7px; fill: #111; }
.t11 { font-size: 11px; fill: #222; }
.clk { fill: #2828a0; font-size: 7px; }
.clk path { fill: none; stroke: #2828a0; }
.pick { fill: #ffc1cb; mix-blend-mode: multiply; }
.probe { fill: #b00c10; font-size: 13px; font-weight: bold; text-anchor: middle; }
.probe .low { fill: #0808b0; }
.probe text { fill: #f3e6e8; }
.cross { stroke: #1c201c; }
.sim {
  flex: none;
  display: flex;
  align-items: flex-start;
  gap: 16px;
  height: 8px;
  padding: 3px 0 0 8px;
  overflow: hidden;
  background: #dcebf4;
}
.sim .sep { margin: 0 -9px 0 -8px; }
.msgs {
  flex: 1;
  height: 5px;
  margin-left: 45px;
  border-left: 1px solid #9fb4c0;
}
```
